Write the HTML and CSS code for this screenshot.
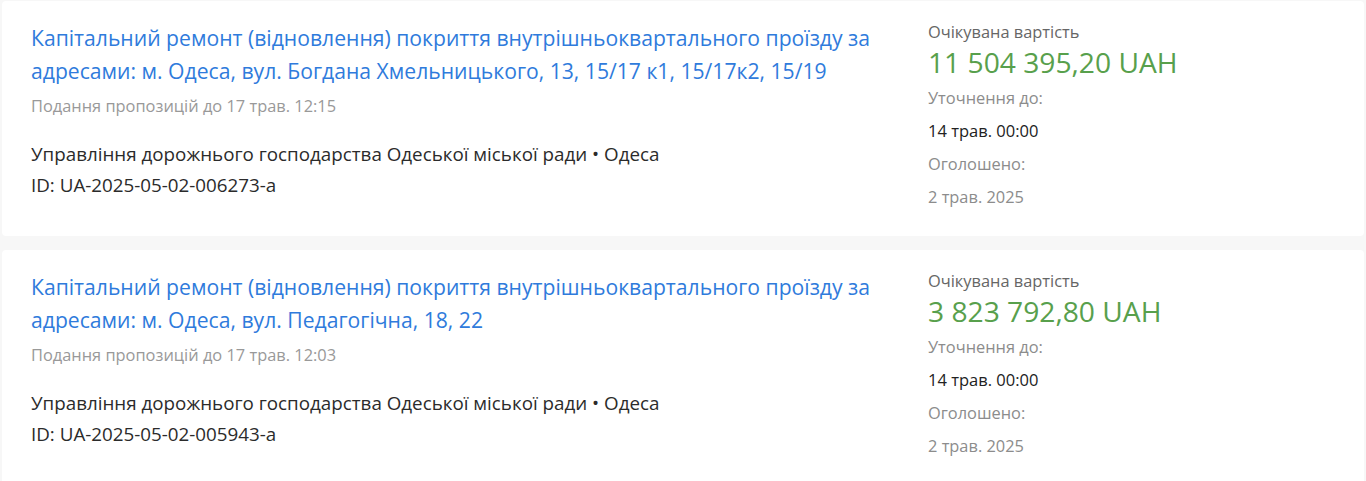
FILE: index.html
```html
<!DOCTYPE html>
<html lang="uk">
<head>
<meta charset="utf-8">
<title>Тендери</title>
<link rel="stylesheet" href="styles.css">
</head>
<body>
<div class="list">
  <div class="card">
    <div class="main">
      <a class="title" href="#">Капітальний ремонт (відновлення) покриття внутрішньоквартального проїзду за адресами: м. Одеса, вул. Богдана Хмельницького, 13, 15/17 к1, 15/17к2, 15/19</a>
      <div class="deadline">Подання пропозицій до 17 трав. 12:15</div>
      <div class="org">Управління дорожнього господарства Одеської міської ради • Одеса</div>
      <div class="org">ID: UA-2025-05-02-006273-a</div>
    </div>
    <div class="side">
      <div class="label">Очікувана вартість</div>
      <div class="value">11 504 395,20 UAH</div>
      <div class="muted">Уточнення до:</div>
      <div class="dark">14 трав. 00:00</div>
      <div class="muted">Оголошено:</div>
      <div class="muted">2 трав. 2025</div>
    </div>
  </div>
  <div class="card">
    <div class="main">
      <a class="title" href="#">Капітальний ремонт (відновлення) покриття внутрішньоквартального проїзду за адресами: м. Одеса, вул. Педагогічна, 18, 22</a>
      <div class="deadline">Подання пропозицій до 17 трав. 12:03</div>
      <div class="org">Управління дорожнього господарства Одеської міської ради • Одеса</div>
      <div class="org">ID: UA-2025-05-02-005943-a</div>
    </div>
    <div class="side">
      <div class="label">Очікувана вартість</div>
      <div class="value">3 823 792,80 UAH</div>
      <div class="muted">Уточнення до:</div>
      <div class="dark">14 трав. 00:00</div>
      <div class="muted">Оголошено:</div>
      <div class="muted">2 трав. 2025</div>
    </div>
  </div>
</div>
</body>
</html>
```
FILE: styles.css
```css
html, body {
  margin: 0;
  padding: 0;
  background: #f7f7f7;
  font-family: "Open Sans", "Noto Sans", sans-serif;
}
.list {
  display: flex;
  flex-direction: column;
  gap: 14px;
  padding: 1px 2px 0 2px;
}
.card {
  background: #fff;
  border-radius: 4px;
  display: grid;
  grid-template-columns: 1fr 407px;
  column-gap: 30px;
  padding: 20px 29px 23px 29px;
}
.main {
  display: flex;
  flex-direction: column;
}
.title {
  font-size: 21.15px;
  line-height: 33px;
  color: #2f7bdc;
  text-decoration: none;
}
.deadline {
  margin-top: 8px;
  font-size: 16.4px;
  line-height: 22px;
  color: #999;
}
.deadline + .org {
  margin-top: 22px;
}
.org {
  font-size: 18.8px;
  line-height: 31px;
  color: #2b2b2b;
}
.side {
  display: flex;
  flex-direction: column;
}
.label {
  font-size: 16.4px;
  line-height: 22px;
  color: #666;
}
.value {
  font-size: 28.2px;
  line-height: 38px;
  color: #58a04c;
}
.muted, .dark {
  font-size: 16.4px;
  line-height: 33px;
  color: #8c8c8c;
}
.dark {
  font-size: 16.5px;
  color: #222;
}
```
